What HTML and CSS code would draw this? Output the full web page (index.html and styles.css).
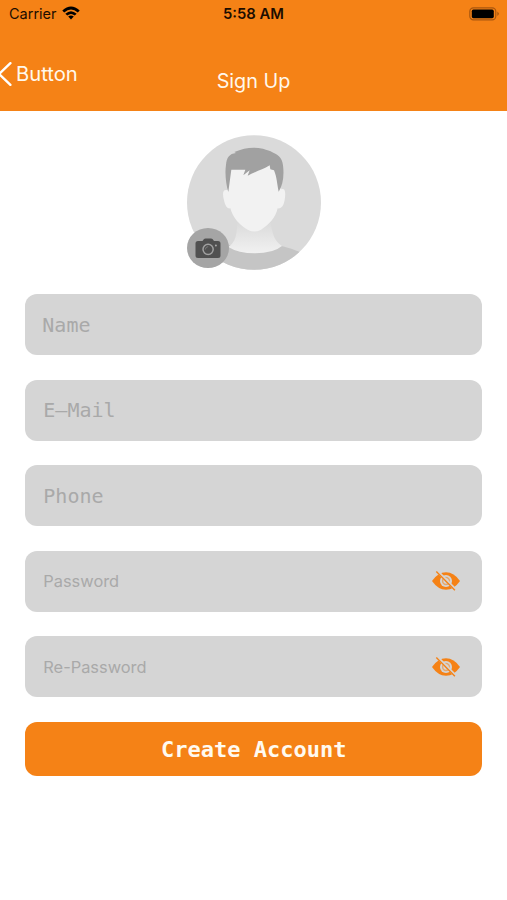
FILE: index.html
```html
<!DOCTYPE html>
<html lang="en">
<head>
<meta charset="utf-8">
<title>Sign Up</title>
<link rel="stylesheet" href="styles.css">
</head>
<body>
<header class="header">
  <div class="status">
    <div class="carrier"><span>Carrier</span>
      <svg class="wifi" viewBox="0 0 18 14" width="18" height="14"><path d="M0.3 4.500Q9-3.300 17.700 4.500L15.800 6.500Q9 .6 2.200 6.500Z"/><path d="M3.300 7.700Q9 2.700 14.700 7.700L12.700 9.600Q9 6.500 5.300 9.600Z"/><path d="M6.200 10.600Q9 8.400 11.800 10.600L9 13.400Z"/></svg>
    </div>
    <span class="time">5:58 AM</span>
    <svg class="battery" viewBox="0 0 31 14" width="31" height="14"><rect x=".8" y=".8" width="26" height="12" rx="3.600" fill="none" stroke="#a9570f" stroke-width="1.200"/><rect x="2.800" y="2.600" width="22" height="8.600" rx="1.600" fill="#000"/><path d="M28.300 4.500Q31.600 6.800 28.300 9Z" fill="#a9570f"/></svg>
  </div>
  <nav class="nav">
    <div class="back">
      <svg class="chevron" viewBox="0 0 12 24" width="12" height="24"><path d="M10.400 1.200L-.8 12L10.400 22.800" fill="none" stroke="#fff" stroke-width="2.400" stroke-linecap="round"/></svg>
      <span>Button</span>
    </div>
    <h1 class="title">Sign Up</h1>
  </nav>
</header>
<main class="content">
  <div class="avatar">
    <svg viewBox="36 30 402 405" width="134" height="135">
      <defs>
        <clipPath id="round"><ellipse cx="237" cy="232.500" rx="201" ry="202"/></clipPath>
        <linearGradient id="neck" x1="0" y1="0" x2="0" y2="1"><stop offset="0" stop-color="#d9d9d9"/><stop offset="1" stop-color="#f1f1f1"/></linearGradient>
      </defs>
      <g clip-path="url(#round)">
        <rect x="30" y="25" width="415" height="415" fill="#dadada"/>
        <path d="M80 400Q130 374 164 360L315 362C345 369 362 375 376 382L440 440H60Z" fill="#c5c5c5"/>
        <path d="M187 285Q187 326 178 346Q174 356 160 366Q190 385 240 385Q295 385 321 363Q290 345 287 285Z" fill="url(#neck)"/>
        <path d="M158 196C142 190 142 208 147 226C151 245 158 252 166 250C174 279 193 300 221 316Q238 324 257 315C283 299 302 277 308 250C319 252 326 242 329 225C333 201 330 188 319 193L304 100H169Z" fill="#f2f2f2"/>
        <path d="M160 201C153 180 149 145 153 119C155 98 163 86 183 84L178 81C208 68 235 65 264 71C276 75 286 77 292 82C314 91 324 103 325 131C327 160 322 182 311 200C306 177 306 158 297 136L286 133L284 121C263 134 243 139 218 152L224 136L205 151L211 134L169 134C166 157 163 177 160 201Z" fill="#a1a1a1"/>
      </g>
    </svg>
    <div class="camera">
      <svg viewBox="0 0 26 21" width="26" height="21"><path d="M3 3H7.500L9 1Q9.500 .4 10.500 .4H16Q17 .4 17.500 1L19 3H23Q25.500 3 25.500 5.500V17.500Q25.500 20 23 20H3Q.5 20 .5 17.500V5.500Q.5 3 3 3Z" fill="#505050"/><circle cx="13.100" cy="11.300" r="5.100" fill="none" stroke="#a0a0a0" stroke-width="1.500"/><path d="M10.300 11.500Q10.500 8.800 13.200 8.600" fill="none" stroke="#858585" stroke-width=".8"/><circle cx="20.900" cy="7.400" r="1" fill="#a9a9a9"/></svg>
    </div>
  </div>
  <form class="form">
    <div class="field name">Name</div>
    <div class="field">E–Mail</div>
    <div class="field">Phone</div>
    <div class="field secret"><span>Password</span>
      <svg class="eye" viewBox="0 0 28 20" width="28" height="20"><path d="M0 10Q6 1.300 14 1.300T28 10Q22 18.700 14 18.700T0 10Z" fill="#f58216"/><circle cx="14" cy="10" r="6" fill="#d5d5d5"/><circle cx="14" cy="10" r="3.400" fill="none" stroke="#e5a76c" stroke-width="1.500"/><path d="M5.300 .2L23.800 19" stroke="#d5d5d5" stroke-width="3"/><path d="M4.300 .5L22.900 19.300" stroke="#f58216" stroke-width="1.400"/></svg>
    </div>
    <div class="field secret"><span>Re-Password</span>
      <svg class="eye" viewBox="0 0 28 20" width="28" height="20"><path d="M0 10Q6 1.300 14 1.300T28 10Q22 18.700 14 18.700T0 10Z" fill="#f58216"/><circle cx="14" cy="10" r="6" fill="#d5d5d5"/><circle cx="14" cy="10" r="3.400" fill="none" stroke="#e5a76c" stroke-width="1.500"/><path d="M5.300 .2L23.800 19" stroke="#d5d5d5" stroke-width="3"/><path d="M4.300 .5L22.900 19.300" stroke="#f58216" stroke-width="1.400"/></svg>
    </div>
    <button class="submit" type="button">Create Account</button>
  </form>
</main>
</body>
</html>
```
FILE: styles.css
```css
* { box-sizing: border-box; }
body {
  margin: 0;
  min-height: 900px;
  background: #fff;
  font-family: Inter, "Liberation Sans", sans-serif;
}
svg { display: block; flex: none; }
.header {
  height: 110.5px;
  background: #f58216;
}
.status {
  display: grid;
  grid-template-columns: 1fr auto 1fr;
  align-items: center;
  height: 27px;
  padding: 0 7px 0 9px;
  color: #1c0d00;
  font-size: 14.5px;
}
.carrier {
  display: flex;
  align-items: center;
  gap: 5px;
}
.wifi { margin-top: -2px; }
.time {
  margin-right: 2px;
  font-weight: 600;
  font-size: 14.8px;
}
.battery {
  justify-self: end;
}
.nav {
  display: grid;
  grid-template-columns: 1fr auto 1fr;
  height: 82px;
  color: #fff8ec;
}
.back {
  display: flex;
  align-items: center;
  gap: 4px;
  height: 24px;
  margin-top: 35px;
  font-size: 20.2px;
}
.back span { margin-top: -1px; }
.title {
  margin: 42px 0 0;
  font-size: 19.8px;
  line-height: 24px;
  font-weight: 400;
}
.content {
  padding: 24.5px 24.7px 0 25.3px;
}
.avatar {
  position: relative;
  width: 134px;
  height: 135px;
  margin: 0 auto;
}
.camera {
  position: absolute;
  left: 0;
  bottom: 2px;
  display: flex;
  align-items: center;
  justify-content: center;
  width: 42px;
  height: 40px;
  border-radius: 50%;
  background: #a5a5a5;
}
.form {
  display: flex;
  flex-direction: column;
  gap: 24.6px;
  margin-top: 24px;
}
.field {
  display: flex;
  align-items: center;
  height: 61px;
  padding: 0 22.5px 0 18px;
  border-radius: 12px;
  background: #d5d5d5;
  color: #a9a9a9;
  font: 20px "DejaVu Sans Mono", monospace;
}
.name { padding-left: 17px; }
.secret {
  justify-content: space-between;
  font: 16.4px Inter, "Liberation Sans", sans-serif;
}
.submit {
  height: 54.5px;
  padding: 0;
  border: 0;
  border-radius: 12px;
  background: #f58216;
  color: #fffaf0;
  font: bold 22px "DejaVu Sans Mono", monospace;
}
```
